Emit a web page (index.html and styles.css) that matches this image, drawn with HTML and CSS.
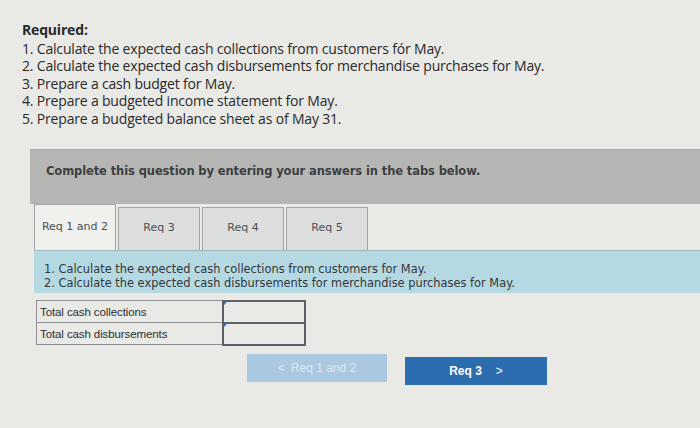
FILE: index.html
```html
<!DOCTYPE html>
<html>
<head>
<meta charset="utf-8">
<link rel="stylesheet" href="styles.css">
</head>
<body>
<div class="page">
  <div class="required">
    <div class="req-title">Required:</div>
    <div>1. Calculate the expected cash collections from customers fór May.</div>
    <div>2. Calculate the expected cash disbursements for merchandise purchases for May.</div>
    <div>3. Prepare a cash budget for May.</div>
    <div>4. Prepare a budgeted income statement for May.</div>
    <div>5. Prepare a budgeted balance sheet as of May 31.</div>
  </div>

  <div class="banner">Complete this question by entering your answers in the tabs below.</div>

  <div class="tabs">
    <div class="tab active">Req 1 and 2</div>
    <div class="tab">Req 3</div>
    <div class="tab">Req 4</div>
    <div class="tab">Req 5</div>
  </div>

  <div class="panel">
    <div>1. Calculate the expected cash collections from customers for May.</div>
    <div>2. Calculate the expected cash disbursements for merchandise purchases for May.</div>
  </div>

  <table class="answers">
    <tr><td class="label">Total cash collections</td><td class="input"><span class="mark"></span></td></tr>
    <tr><td class="label">Total cash disbursements</td><td class="input"><span class="mark"></span></td></tr>
  </table>

  <div class="nav">
    <div class="btn prev"><span class="chev">&lt;</span> Req 1 and 2</div>
    <div class="btn next">Req 3 <span class="chev">&gt;</span></div>
  </div>
</div>
</body>
</html>
```

FILE: styles.css
```css
html, body {
  margin: 0;
  padding: 0;
  background: #e9e9e5;
  width: 700px;
  height: 428px;
  overflow: hidden;
}
.page {
  padding: 21px 0 0 0;
}
.required {
  font-family: "Open Sans", "Liberation Sans", sans-serif;
  font-size: 14px;
  line-height: 17.6px;
  color: #2a2a2a;
  padding-left: 22px;
  letter-spacing: -0.18px;
}
.req-title {
  font-weight: 700;
  margin-bottom: 1px;
}
.banner {
  margin: 21px 0 0 30px;
  height: 55px;
  box-sizing: border-box;
  background: #b6b7b4;
  font-family: "DejaVu Sans", sans-serif;
  font-weight: 700;
  font-size: 11.5px;
  letter-spacing: -0.1px;
  color: #3d3f42;
  padding: 14px 0 0 16px;
  border-top: 1px solid #a9aaa7;
}
.tabs {
  display: flex;
  gap: 2px;
  margin: 0 0 0 34px;
  height: 46px;
  align-items: flex-end;
}
.tab {
  width: 82px;
  height: 43px;
  box-sizing: border-box;
  background: #dcdedd;
  border: 1px solid #a2a5a6;
  border-bottom: none;
  font-family: "DejaVu Sans", sans-serif;
  font-size: 11px;
  color: #4b4f55;
  display: flex;
  justify-content: center;
  padding-top: 13px;
}
.tab.active {
  height: 46px;
  background: #f0f0ed;
  padding-top: 15px;
}
.panel {
  margin-left: 34px;
  height: 43px;
  box-sizing: border-box;
  background: #b5d9e2;
  border-top: 1px solid #9fb8bf;
  font-family: "DejaVu Sans", sans-serif;
  font-size: 11.4px;
  line-height: 14px;
  color: #33373b;
  padding: 11px 0 0 10px;
}
.answers {
  margin: 7px 0 0 36px;
  border-collapse: collapse;
  font-family: "Liberation Sans", Arial, sans-serif;
  font-size: 11.5px;
  color: #2d2f33;
}
.answers td {
  height: 20px;
  padding: 0;
  border: 1px solid #8d8f92;
}
.answers td.label {
  width: 182px;
  padding-left: 3px;
  letter-spacing: -0.1px;
}
.answers td.input {
  width: 80px;
  border: 2px solid #5d6166;
  position: relative;
}
.mark {
  position: absolute;
  left: 0;
  top: 0;
  width: 0;
  height: 0;
  border-top: 3px solid #3a6fb0;
  border-right: 3px solid transparent;
}
.nav {
  display: flex;
  margin: 8px 0 0 247px;
  gap: 18px;
  align-items: flex-start;
}
.btn {
  width: 140px;
  height: 28px;
  box-sizing: border-box;
  display: flex;
  justify-content: center;
  align-items: center;
  font-family: "Liberation Sans", Arial, sans-serif;
  font-weight: 700;
  font-size: 12px;
  color: #ffffff;
}
.btn.prev {
  background: #aac9e0;
  color: #dbe8f3;
  font-weight: 400;
  gap: 6px;
}
.btn.next {
  margin-top: 3px;
  width: 142px;
  background: #2c6db0;
  gap: 14px;
}
.chev {
  font-weight: 400;
}
```
